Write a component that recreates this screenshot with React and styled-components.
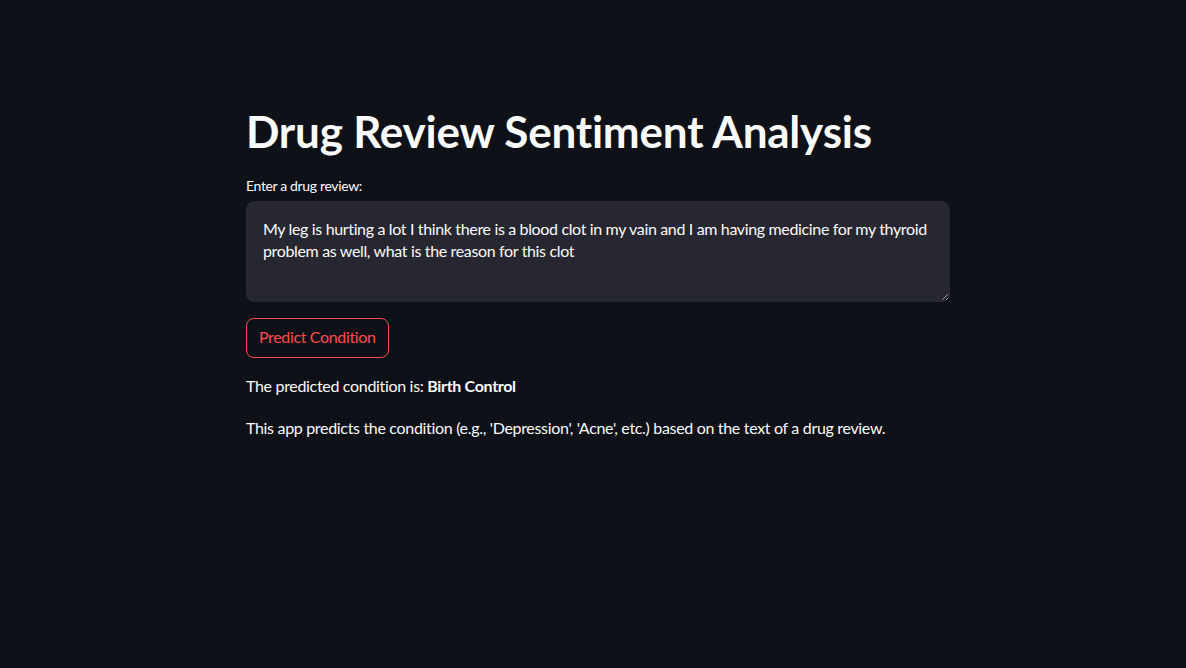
import React from "react";
import styled, { createGlobalStyle } from "styled-components";

const Global = createGlobalStyle`
  html, body { margin: 0; padding: 0; background: #0e1117; }
  body { font-family: Lato, "Noto Sans", sans-serif; color: #fafafa; }
  * { box-sizing: border-box; }
`;

const Page = styled.main`
  min-height: 668px;
  background: #0e1117;
  display: flex;
  justify-content: center;
  padding: 96px 6px 0 16px;
`;

const Column = styled.div`
  width: 704px;
  display: flex;
  flex-direction: column;
`;

const Title = styled.h1`
  margin: 0;
  font-size: 44px;
  font-weight: 700;
  line-height: 70px;
  color: #fafafa;
  letter-spacing: -0.2px;
`;

const Label = styled.label`
  margin-top: 10px;
  font-size: 14px;
  line-height: 20px;
  color: #fafafa;
  letter-spacing: -0.35px;
`;

const Area = styled.textarea`
  margin-top: 5px;
  width: 100%;
  height: 101px;
  background: #262730;
  border: 1px solid #262730;
  border-radius: 8px;
  color: #fafafa;
  font-family: inherit;
  font-size: 16px;
  line-height: 22px;
  letter-spacing: -0.35px;
  padding: 16px;
  resize: vertical;
  outline: none;
`;

const Button = styled.button`
  margin-top: 16px;
  align-self: flex-start;
  height: 40px;
  padding: 0 12px 3px;
  border: 1px solid #ff4b4b;
  border-radius: 8px;
  background: transparent;
  color: #ff4b4b;
  font-family: inherit;
  font-size: 16px;
  letter-spacing: -0.35px;
`;

const Text = styled.p`
  margin: ${(p) => p.$top}px 0 0;
  font-size: 16px;
  line-height: 24px;
  color: #fafafa;
  letter-spacing: -0.32px;
`;

export default function App() {
  return (
    <Page>
      <Global />
      <Column>
        <Title>Drug Review Sentiment Analysis</Title>
        <Label>Enter a drug review:</Label>
        <Area
          defaultValue="My leg is hurting a lot I think there is a blood clot in my vain and I am having medicine for my thyroid problem as well, what is the reason for this clot"
        />
        <Button>Predict Condition</Button>
        <Text $top={16}>
          The predicted condition is: <strong>Birth Control</strong>
        </Text>
        <Text $top={18}>
          This app predicts the condition (e.g., 'Depression', 'Acne', etc.) based on the text of a drug review.
        </Text>
      </Column>
    </Page>
  );
}
